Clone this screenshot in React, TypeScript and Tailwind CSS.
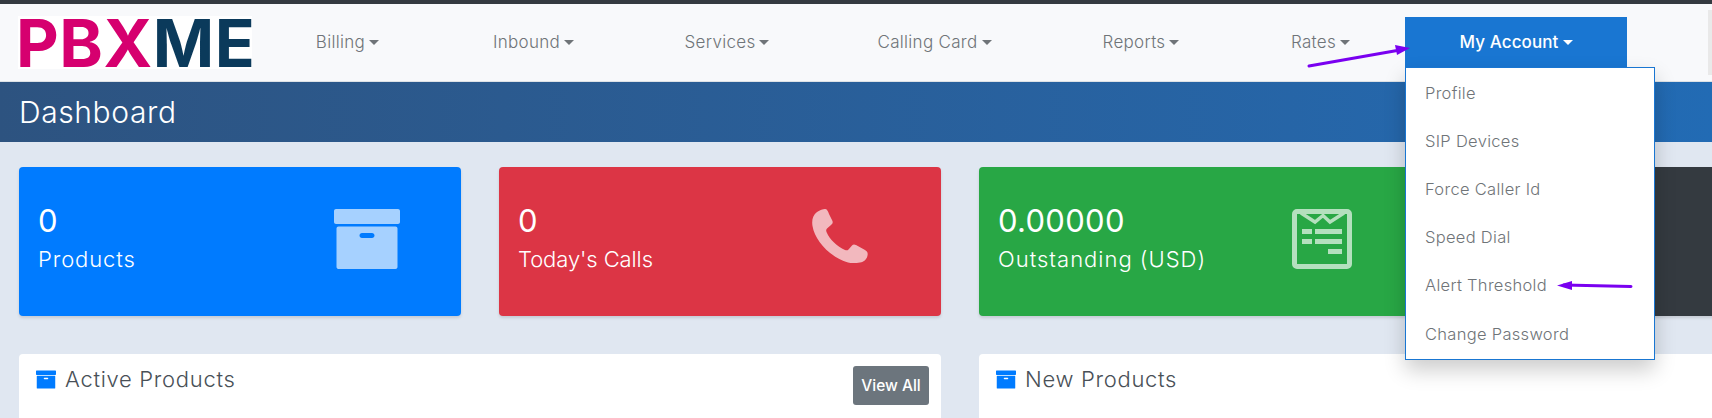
const font = { fontFamily: "Inter, sans-serif" };

const navItems = [
  { label: "Billing", w: "w-[177px]" },
  { label: "Inbound", w: "w-[195px]" },
  { label: "Services", w: "w-[192px]" },
  { label: "Calling Card", w: "w-[223px]" },
  { label: "Reports", w: "w-[190px]" },
  { label: "Rates", w: "w-[169px]" },
];

const menu = ["Profile", "SIP Devices", "Force Caller Id", "Speed Dial", "Alert Threshold", "Change Password"];

function Caret({ color }: { color: string }) {
  return <span className={`ml-[4px] inline-block h-0 w-0 border-x-[5px] border-t-[5px] border-x-transparent align-[3px] ${color}`} />;
}

function BoxIcon({ className, color }: { className: string; color: string }) {
  return (
    <svg viewBox="0 0 66 60" className={className} fill={color}>
      <path
        fillRule="evenodd"
        d="M2 0H64C65.1 0 66 .9 66 2V13C66 14.1 65.1 15 64 15H2C.9 15 0 14.1 0 13V2C0 .9.9 0 2 0ZM4.5 17.5H61.5C62.6 17.5 63.500 18.400 63.500 19.500V58C63.500 59.100 62.600 60 61.500 60H4.500C3.400 60 2.500 59.100 2.500 58V19.500C2.500 18.400 3.400 17.500 4.500 17.500ZM28 24C26.600 24 25.500 25.100 25.500 26.500C25.500 27.900 26.600 29 28 29H38C39.400 29 40.500 27.900 40.500 26.500C40.500 25.100 39.400 24 38 24Z"
      />
    </svg>
  );
}

function PhoneIcon() {
  return (
    <svg viewBox="0 0 56 55" className="h-[55px] w-[56px]" fill="#fff">
      <path d="M5 3C8 1 11 0 13 0C15 0 16 2 17 5L20.500 12C21 14 20.500 15 19 16L15 19.500C14 20.500 14 21.500 14.500 23C18 31 25 37 33 41C34.500 41.500 35.500 41.500 36.500 40.500L40 36.500C41 35.500 42 35 44 36L53 41C55.500 42.500 56 44 55.500 46.500C55 50 52 53 48 53.500C44 54 40 54.500 36 53.500C18 48 3 32 .5 17C-.5 11 1 6 5 3Z" />
    </svg>
  );
}

function InvoiceIcon() {
  return (
    <svg viewBox="0 0 60 60" className="h-[60px] w-[60px]">
      <rect x="2.500" y="2.500" width="55" height="55" rx="2.500" fill="none" stroke="#fff" strokeWidth="5" />
      <path d="M9 4L23 13L31 6.500L38 13L52 4" fill="none" stroke="#fff" strokeWidth="3.500" />
      <g fill="#fff">
        <rect x="10" y="20" width="10" height="5" />
        <rect x="23" y="20" width="27" height="5" />
        <rect x="10" y="30" width="10" height="5" />
        <rect x="23" y="30" width="27" height="5" />
        <rect x="36" y="40" width="14" height="5" />
      </g>
    </svg>
  );
}

const cards = [
  { bg: "bg-[#007bff]", value: "0", label: "Products", track: "tracking-[0.9px]", icon: <BoxIcon className="h-[60px] w-[66px]" color="#fff" />, iconW: "w-[66px]", mr: "mr-[61px]" },
  { bg: "bg-[#dc3545]", value: "0", label: "Today's Calls", track: "tracking-[-0.1px]", icon: <PhoneIcon />, iconW: "w-[56px]", mr: "mr-[73px]" },
  { bg: "bg-[#28a745]", value: "0.00000", label: "Outstanding (USD)", track: "tracking-[1px]", icon: <InvoiceIcon />, iconW: "w-[60px]", mr: "mr-[69px]" },
];

function Panel({ title, children }: { title: string; children?: React.ReactNode }) {
  return (
    <div className="flex h-[70px] w-[922px] shrink-0 rounded-t-[4px] bg-white pl-[17px] pr-[12px]">
      <div className="flex items-start pt-[13px]">
        <BoxIcon className="mt-[3px] h-[19px] w-[20px]" color="#007bff" />
        <span className="ml-[9px] text-[22px] leading-[24px] font-light tracking-[0.7px] text-[#495057]">{title}</span>
      </div>
      <div className="ml-auto pt-[12px]">{children}</div>
    </div>
  );
}

export default function App() {
  return (
    <div className="relative h-[418px] w-[1712px] overflow-hidden bg-white" style={font}>
      <div className="h-[4px] bg-[#343a40]" />
      <nav className="flex h-[78px] items-start border-b border-[#dee2e6] bg-[#f8f9fb]">
        <div className="mt-[12px] ml-[18px] h-[53px] w-[241px] shrink-0">
          <div className="flex h-[53px] w-[234px] items-center bg-white text-[66px] leading-none font-bold tracking-[0.5px]">
            <span className="-ml-[2px] text-[#d6006f]">PBX</span>
            <span className="text-[#0b3a5b]">ME</span>
          </div>
        </div>
        {navItems.map((n) => (
          <div key={n.label} className={`${n.w} shrink-0 pt-[26px] text-center text-[17px] leading-[24px] font-light tracking-[0.3px] text-[#6f7478]`}>
            {n.label}
            <Caret color="border-t-[#6f7478]" />
          </div>
        ))}
        <div className="mt-[13px] h-[50px] w-[222px] shrink-0 bg-[#1976d2] pt-[13px] text-center text-[17px] leading-[24px] font-medium tracking-[0.1px] text-white">
          My Account
          <Caret color="border-t-white" />
        </div>
        <div className="mt-[6px] ml-[81px] h-[65px] w-[4px] bg-[#e9e9e9]" />
      </nav>
      <header className="flex h-[60px] items-center bg-gradient-to-r from-[#2d5380] to-[#226bb4] pl-[19px] text-[30px] font-light tracking-[0.6px] text-white">
        Dashboard
      </header>
      <main className="bg-[#e0e7f1] pt-[25px] pl-[19px]">
        <div className="flex gap-[38px]">
          {cards.map((c) => (
            <div key={c.label} className={`flex h-[149px] w-[442px] shrink-0 items-start rounded-[4px] ${c.bg} pl-[19px] shadow-[0_2px_3px_rgba(0,0,0,0.12)]`}>
              <div className="pt-[34px] text-white">
                <div className="text-[31px] leading-[40px] font-normal tracking-[0.3px]">{c.value}</div>
                <div className={`mt-[3px] text-[22px] leading-[30px] font-light ${c.track}`}>{c.label}</div>
              </div>
              <div className={`mt-[42px] ml-auto ${c.iconW} ${c.mr} opacity-65`}>{c.icon}</div>
            </div>
          ))}
          <div className="h-[149px] w-[442px] shrink-0 rounded-[4px] bg-[#343a40] shadow-[0_2px_3px_rgba(0,0,0,0.12)]" />
        </div>
        <div className="mt-[38px] flex gap-[38px]">
          <Panel title="Active Products">
            <button className="h-[39px] w-[76px] rounded-[3px] bg-[#6c757d] text-[15.500px] font-medium text-white">View All</button>
          </Panel>
          <Panel title="New Products" />
        </div>
      </main>

      {/* open dropdown */}
      <div className="absolute top-[67px] left-[1405px] w-[250px] border border-[#1976d2] bg-white pt-[1px] pb-[1px] shadow-[0_10px_20px_rgba(0,0,0,0.2)]">
        {menu.map((m) => (
          <div key={m} className="flex h-[48.2px] items-center pl-[19px] text-[16.500px] font-light tracking-[0.3px] text-[#6f7478]">{m}</div>
        ))}
      </div>

      {/* annotation arrows */}
      <svg className="absolute top-[40px] left-[1300px] h-[35px] w-[120px]" viewBox="0 0 120 35">
        <path d="M9 26L100 10" stroke="#7a00f0" strokeWidth="3" strokeLinecap="round" fill="none" />
        <path d="M110 8L95 5L97 15Z" fill="#7a00f0" />
      </svg>
      <svg className="absolute top-[275px] left-[1550px] h-[20px] w-[90px]" viewBox="0 0 90 20">
        <path d="M14 10L81 11.500" stroke="#7a00f0" strokeWidth="3" strokeLinecap="round" fill="none" />
        <path d="M7 10.500L22 6L22 15Z" fill="#7a00f0" />
      </svg>
    </div>
  );
}
